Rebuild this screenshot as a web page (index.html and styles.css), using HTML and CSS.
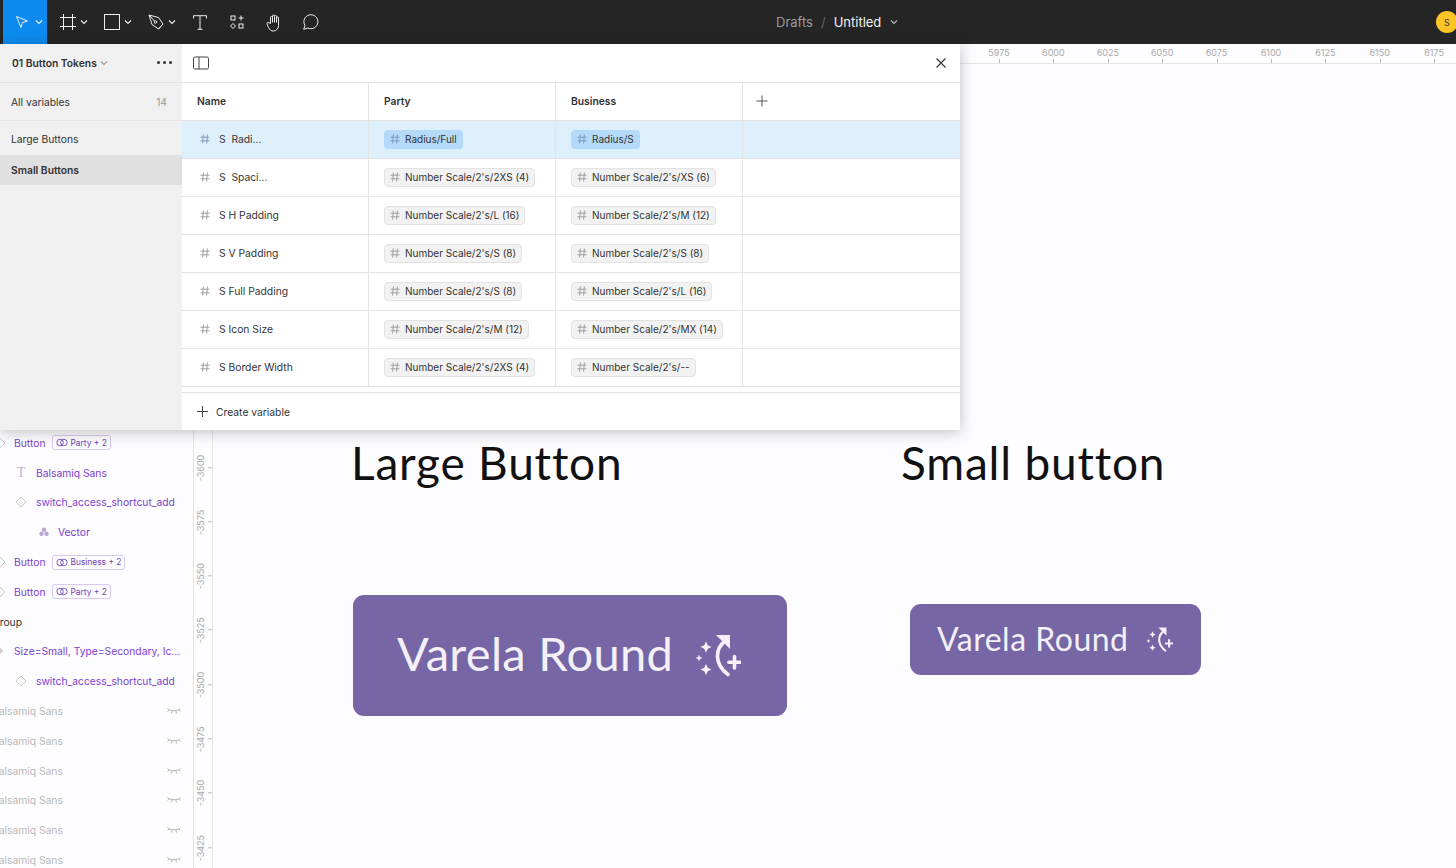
FILE: index.html
```html
<!DOCTYPE html>
<html lang="en">
<head>
    <meta charset="UTF-8">
    <title>Untitled - Variables</title>
    <link rel="stylesheet" href="styles.css">
</head>
<body>
    <svg class="defs" width="0" height="0">
        <symbol id="hash" viewBox="0 0 10 10">
            <path d="M3.4 .5 2.6 9.5M7.4 .5 6.6 9.5M.5 3.2H9.5M.5 6.8H9.5" fill="none" stroke="currentColor"/>
        </symbol>
        <symbol id="chev" viewBox="0 0 8 8">
            <path d="M1 2.5 4 5.5 7 2.5" fill="none" stroke="currentColor" stroke-width="1.1"/>
        </symbol>
        <symbol id="diamond" viewBox="0 0 12 12">
            <path d="M6 1 11 6 6 11 1 6Z" fill="none" stroke="currentColor"/>
        </symbol>
        <symbol id="mode" viewBox="0 0 14 10">
            <circle cx="4.8" cy="5" r="3.8" fill="none" stroke="currentColor"/>
            <circle cx="9.2" cy="5" r="3.8" fill="none" stroke="currentColor"/>
        </symbol>
        <symbol id="eye" viewBox="0 0 14 8">
            <path d="M.5 1.5C3 4.5 11 4.5 13.500 1.500M2 3 .8 4.500M12 3 13.200 4.500M5 4.200 4.500 6.500M9 4.200 9.500 6.500" fill="none" stroke="currentColor" stroke-width=".9"/>
        </symbol>
        <symbol id="shortcut" viewBox="0 0 46 43">
            <path d="M11 7.500 12.800 11.300 16.500 13 12.800 14.700 11 18.500 9.200 14.700 5.500 13 9.200 11.300ZM4 20.500 5 23 7.500 24 5 25 4 27.500 3 25 .5 24 3 23ZM11 30 12.800 33.800 16.500 35.500 12.800 37.200 11 41 9.200 37.200 5.500 35.500 9.200 33.800Z" fill="currentColor"/>
            <path d="M21 1H35V15L30 10Z" fill="currentColor"/>
            <path d="M30 7C20 15 19 30 33 40.500M39.500 22.500V34M33.800 28.300H45" fill="none" stroke="currentColor" stroke-width="3.600" stroke-linecap="round"/>
        </symbol>
    </svg>

    <header class="topbar">
        <div class="tool tool-move">
            <svg width="14" height="14" viewBox="0 0 14 14"><path d="M1.500 1.500 12.500 6 7.500 7.500 6 12.500Z" fill="none" stroke="currentColor"/></svg>
            <svg class="chev" width="8" height="8"><use href="#chev"/></svg>
        </div>
        <div class="tool tool-frame">
            <svg width="16" height="16" viewBox="0 0 16 16"><path d="M3.500 0V16M12.500 0V16M0 3.500H16M0 12.500H16" fill="none" stroke="currentColor"/></svg>
            <svg class="chev" width="8" height="8"><use href="#chev"/></svg>
        </div>
        <div class="tool tool-rect">
            <svg width="16" height="16" viewBox="0 0 16 16"><rect x=".5" y=".5" width="15" height="15" fill="none" stroke="currentColor"/></svg>
            <svg class="chev" width="8" height="8"><use href="#chev"/></svg>
        </div>
        <div class="tool tool-pen">
            <svg width="16" height="16" viewBox="0 0 16 16"><path d="M1 1 10.500 3.500 15 10 10.500 15 4 10.500ZM1 1 6.500 7M15 10 10.500 15" fill="none" stroke="currentColor"/><circle cx="7.500" cy="8" r="1.300" fill="none" stroke="currentColor"/></svg>
            <svg class="chev" width="8" height="8"><use href="#chev"/></svg>
        </div>
        <div class="tool tool-text">
            <svg width="14" height="15" viewBox="0 0 14 15"><path d="M.5 3.500V.7H13.500V3.500M7 .7V14.300M4.500 14.300H9.500" fill="none" stroke="currentColor"/></svg>
        </div>
        <div class="tool tool-res">
            <svg width="15" height="15" viewBox="0 0 15 15"><rect x="1" y="1" width="4" height="4" fill="none" stroke="currentColor"/><path d="M11 .5V5.500M8.500 3H13.500M3 8.500 5.500 11 3 13.500 .5 11Z" fill="none" stroke="currentColor"/><rect x="9" y="9" width="4" height="4" fill="none" stroke="currentColor"/></svg>
        </div>
        <div class="tool tool-hand">
            <svg width="17" height="19" viewBox="0 0 17 18"><path d="M4.500 10V4a1 1 0 0 1 2 0V2.500a1 1 0 0 1 2 0V3a1 1 0 0 1 2 0V4.500a1 1 0 0 1 2 0V12c0 3-2 5.500-5 5.500-2.500 0-3.500-1-5-3.500L1 10.500c-.6-1.300 1-2 2-1.200Z" fill="none" stroke="currentColor"/><path d="M6.500 4V9M8.500 3V9M10.500 4V9" stroke="currentColor"/></svg>
        </div>
        <div class="tool tool-comment">
            <svg width="16" height="16" viewBox="0 0 16 16"><path d="M.7 15.300 2 11.500A7 7 0 1 1 4.800 14Z" fill="none" stroke="currentColor"/></svg>
        </div>
        <div class="title">
            <span class="crumb">Drafts</span>
            <span class="slash">/</span>
            <span class="file">Untitled</span>
            <svg class="chev" width="8" height="8"><use href="#chev"/></svg>
        </div>
        <div class="avatar">S</div>
    </header>

    <div class="workspace">
        <aside class="layers">
            <div class="layer"><svg class="ico cut" width="12" height="12"><use href="#diamond"/></svg><span class="name">Button</span><span class="badge"><svg width="12" height="9"><use href="#mode"/></svg>Party + 2</span></div>
            <div class="layer lvl1"><span class="t-ico">T</span><span class="name">Balsamiq Sans</span></div>
            <div class="layer lvl1"><svg class="ico" width="12" height="12"><use href="#diamond"/></svg><span class="name">switch_access_shortcut_add</span></div>
            <div class="layer lvl2">
                <svg class="ico" width="10" height="10" viewBox="0 0 10 10"><circle cx="5" cy="2.800" r="2.200" fill="currentColor"/><circle cx="2.500" cy="6.800" r="2.200" fill="currentColor"/><circle cx="7.500" cy="6.800" r="2.200" fill="currentColor"/></svg>
                <span class="name">Vector</span>
            </div>
            <div class="layer"><svg class="ico cut" width="12" height="12"><use href="#diamond"/></svg><span class="name">Button</span><span class="badge"><svg width="12" height="9"><use href="#mode"/></svg>Business + 2</span></div>
            <div class="layer"><svg class="ico cut" width="12" height="12"><use href="#diamond"/></svg><span class="name">Button</span><span class="badge"><svg width="12" height="9"><use href="#mode"/></svg>Party + 2</span></div>
            <div class="layer plain"><span class="name">Group</span></div>
            <div class="layer"><svg class="ico cut" width="12" height="12" viewBox="0 0 12 12"><path d="M6 3 9 6 6 9 3 6Z" fill="currentColor"/></svg><span class="name">Size=Small, Type=Secondary, Ic...</span></div>
            <div class="layer lvl1"><svg class="ico" width="12" height="12"><use href="#diamond"/></svg><span class="name">switch_access_shortcut_add</span></div>
            <div class="layer hidden"><span class="name">Balsamiq Sans</span><svg class="eye" width="14" height="8"><use href="#eye"/></svg></div>
            <div class="layer hidden"><span class="name">Balsamiq Sans</span><svg class="eye" width="14" height="8"><use href="#eye"/></svg></div>
            <div class="layer hidden"><span class="name">Balsamiq Sans</span><svg class="eye" width="14" height="8"><use href="#eye"/></svg></div>
            <div class="layer hidden"><span class="name">Balsamiq Sans</span><svg class="eye" width="14" height="8"><use href="#eye"/></svg></div>
            <div class="layer hidden"><span class="name">Balsamiq Sans</span><svg class="eye" width="14" height="8"><use href="#eye"/></svg></div>
            <div class="layer hidden"><span class="name">Balsamiq Sans</span><svg class="eye" width="14" height="8"><use href="#eye"/></svg></div>
        </aside>

        <div class="stage">
            <div class="ruler-top">
                <span>5975</span><span>6000</span><span>6025</span><span>6050</span><span>6075</span><span>6100</span><span>6125</span><span>6150</span><span>6175</span>
            </div>
            <div class="stage-body">
                <div class="ruler-left">
                    <span>-3600</span><span>-3575</span><span>-3550</span><span>-3525</span><span>-3500</span><span>-3475</span><span>-3450</span><span>-3425</span>
                </div>
                <main class="canvas">
                    <h2 class="frame-title large-title">Large Button</h2>
                    <h2 class="frame-title small-title">Small button</h2>
                    <div class="demo-btn demo-large"><span class="demo-label">Varela Round</span><svg width="46" height="43"><use href="#shortcut"/></svg></div>
                    <div class="demo-btn demo-small"><span class="demo-label">Varela Round</span><svg width="27" height="25"><use href="#shortcut"/></svg></div>
                </main>
            </div>
        </div>

        <section class="modal">
            <div class="side">
                <div class="side-head">
                    <span class="coll">01 Button Tokens</span>
                    <svg class="coll-chev" width="8" height="8"><use href="#chev"/></svg>
                    <span class="dots"><i></i><i></i><i></i></span>
                </div>
                <div class="side-all"><span>All variables</span><span class="count">14</span></div>
                <div class="side-list">
                    <div class="side-item">Large Buttons</div>
                    <div class="side-item active">Small Buttons</div>
                </div>
            </div>
            <div class="panel">
                <div class="panel-head">
                    <svg width="16" height="14" viewBox="0 0 16 14"><rect x=".5" y="1" width="15" height="12" rx="1.500" fill="none" stroke="#444"/><path d="M6 1V13" stroke="#444"/></svg>
                    <svg width="12" height="12" viewBox="0 0 12 12"><path d="M1.500 1.500 10.500 10.500M10.500 1.500 1.500 10.500" stroke="#333" stroke-width="1.100"/></svg>
                </div>
                <div class="row row-head">
                    <div class="cell">Name</div>
                    <div class="cell">Party</div>
                    <div class="cell">Business</div>
                    <div class="cell cell-add">
                        <svg width="12" height="12" viewBox="0 0 12 12"><path d="M6 .5V11.500M.5 6H11.500" stroke="#555"/></svg>
                    </div>
                </div>
                <div class="row selected">
                    <div class="cell var-name"><svg class="hash" width="10" height="10"><use href="#hash"/></svg>S&nbsp; Radi...</div>
                    <div class="cell"><span class="chip"><svg class="hash" width="10" height="10"><use href="#hash"/></svg>Radius/Full</span></div>
                    <div class="cell"><span class="chip"><svg class="hash" width="10" height="10"><use href="#hash"/></svg>Radius/S</span></div>
                    <div class="cell"></div>
                </div>
                <div class="row">
                    <div class="cell var-name"><svg class="hash" width="10" height="10"><use href="#hash"/></svg>S&nbsp; Spaci...</div>
                    <div class="cell"><span class="chip"><svg class="hash" width="10" height="10"><use href="#hash"/></svg>Number Scale/2's/2XS (4)</span></div>
                    <div class="cell"><span class="chip"><svg class="hash" width="10" height="10"><use href="#hash"/></svg>Number Scale/2's/XS (6)</span></div>
                    <div class="cell"></div>
                </div>
                <div class="row">
                    <div class="cell var-name"><svg class="hash" width="10" height="10"><use href="#hash"/></svg>S H Padding</div>
                    <div class="cell"><span class="chip"><svg class="hash" width="10" height="10"><use href="#hash"/></svg>Number Scale/2's/L (16)</span></div>
                    <div class="cell"><span class="chip"><svg class="hash" width="10" height="10"><use href="#hash"/></svg>Number Scale/2's/M (12)</span></div>
                    <div class="cell"></div>
                </div>
                <div class="row">
                    <div class="cell var-name"><svg class="hash" width="10" height="10"><use href="#hash"/></svg>S V Padding</div>
                    <div class="cell"><span class="chip"><svg class="hash" width="10" height="10"><use href="#hash"/></svg>Number Scale/2's/S (8)</span></div>
                    <div class="cell"><span class="chip"><svg class="hash" width="10" height="10"><use href="#hash"/></svg>Number Scale/2's/S (8)</span></div>
                    <div class="cell"></div>
                </div>
                <div class="row">
                    <div class="cell var-name"><svg class="hash" width="10" height="10"><use href="#hash"/></svg>S Full Padding</div>
                    <div class="cell"><span class="chip"><svg class="hash" width="10" height="10"><use href="#hash"/></svg>Number Scale/2's/S (8)</span></div>
                    <div class="cell"><span class="chip"><svg class="hash" width="10" height="10"><use href="#hash"/></svg>Number Scale/2's/L (16)</span></div>
                    <div class="cell"></div>
                </div>
                <div class="row">
                    <div class="cell var-name"><svg class="hash" width="10" height="10"><use href="#hash"/></svg>S Icon Size</div>
                    <div class="cell"><span class="chip"><svg class="hash" width="10" height="10"><use href="#hash"/></svg>Number Scale/2's/M (12)</span></div>
                    <div class="cell"><span class="chip"><svg class="hash" width="10" height="10"><use href="#hash"/></svg>Number Scale/2's/MX (14)</span></div>
                    <div class="cell"></div>
                </div>
                <div class="row">
                    <div class="cell var-name"><svg class="hash" width="10" height="10"><use href="#hash"/></svg>S Border Width</div>
                    <div class="cell"><span class="chip"><svg class="hash" width="10" height="10"><use href="#hash"/></svg>Number Scale/2's/2XS (4)</span></div>
                    <div class="cell"><span class="chip"><svg class="hash" width="10" height="10"><use href="#hash"/></svg>Number Scale/2's/--</span></div>
                    <div class="cell"></div>
                </div>
                <div class="panel-foot">
                    <svg width="11" height="11" viewBox="0 0 11 11"><path d="M5.500 0V11M0 5.500H11" stroke="#444"/></svg>
                    Create variable
                </div>
            </div>
        </section>
    </div>
</body>
</html>
```

FILE: styles.css
```css
* {
    box-sizing: border-box;
}
html, body {
    height: 100%;
}
body {
    margin: 0;
    overflow: hidden;
    display: flex;
    flex-direction: column;
    font-family: Inter, "Liberation Sans", sans-serif;
    font-size: 10.3px;
    color: #333;
    background: #fdfcfe;
}
.defs {
    position: absolute;
}

/* top bar */
.topbar {
    flex: none;
    height: 44px;
    display: flex;
    align-items: center;
    padding-left: 3px;
    background: #252525;
    color: #eee;
}
.tool {
    height: 44px;
    display: flex;
    align-items: center;
}
.tool .chev {
    margin-left: 4px;
}
.tool-move {
    width: 44px;
    padding-left: 12px;
    background: #0c8cf0;
}
.tool-move .chev {
    margin-left: 6px;
}
.tool-frame {
    width: 45px;
    padding-left: 13px;
}
.tool-rect {
    width: 45px;
    padding-left: 12px;
}
.tool-pen {
    width: 45px;
    padding-left: 11px;
}
.tool-text {
    width: 35px;
    padding-left: 11px;
}
.tool-res {
    width: 41px;
    padding-left: 13px;
}
.tool-hand {
    width: 34px;
    padding-left: 8px;
}
.tool-comment {
    width: 38px;
    padding-left: 11px;
}
.title {
    margin-left: 446px;
    display: flex;
    align-items: center;
    font-size: 13px;
}
.crumb {
    color: #9a9a9a;
}
.slash {
    margin: 0 8px;
    color: #666;
}
.file {
    color: #f2f2f2;
}
.title .chev {
    margin-left: 9px;
    color: #bbb;
}
.avatar {
    margin-left: auto;
    margin-right: -2px;
    width: 22px;
    height: 22px;
    flex: none;
    border-radius: 50%;
    display: flex;
    align-items: center;
    justify-content: center;
    background: #fcc425;
    color: #333;
    font-size: 9px;
}

/* layers + canvas */
.workspace {
    position: relative;
    flex: 1;
    display: flex;
    min-height: 0;
}
.layers {
    flex: none;
    width: 193px;
    padding-top: 384px;
    overflow: hidden;
    color: #7a3fd1;
}
.layer {
    height: 29.8px;
    display: flex;
    align-items: center;
    padding-left: 14px;
    white-space: nowrap;
}
.layer .ico {
    flex: none;
    color: #c9c5d2;
}
.layer .cut {
    margin-left: -20px;
    margin-right: 8px;
}
.lvl1 {
    padding-left: 15px;
}
.lvl1 .ico, .t-ico {
    width: 12px;
    margin-right: 9px;
}
.t-ico {
    color: #bdb4d6;
    font-family: "Liberation Serif", serif;
    font-size: 14px;
    text-align: center;
}
.lvl2 {
    padding-left: 39px;
}
.lvl2 .ico {
    margin-right: 9px;
    color: #b5a8d6;
}
.badge {
    display: inline-flex;
    align-items: center;
    gap: 2px;
    height: 15px;
    margin-left: 7px;
    padding: 0 3px;
    border: 1px solid #d8c8f4;
    border-radius: 3px;
    font-size: 8.4px;
    color: #6f42b8;
}
.plain {
    padding-left: 0;
    color: #333;
}
.plain .name, .hidden .name {
    margin-left: -8px;
}
.hidden {
    padding-left: 0;
    color: #b9b9b9;
}
.eye {
    margin-left: auto;
    margin-right: 12px;
    color: #aaa;
}
.stage {
    flex: 1;
    min-width: 0;
    display: flex;
    flex-direction: column;
}
.ruler-top {
    flex: none;
    height: 20px;
    display: flex;
    padding-left: 778.800px;
    border-bottom: 1px solid #e4e4e4;
    color: #aaa;
    font-size: 9px;
}
.ruler-top span {
    position: relative;
    flex: none;
    width: 54.400px;
    padding-top: 3px;
    text-align: center;
}
.ruler-top span::after {
    content: "";
    position: absolute;
    left: 50%;
    bottom: 0;
    width: 1px;
    height: 4px;
    background: #bbb;
}
.stage-body {
    flex: 1;
    display: flex;
    min-height: 0;
}
.ruler-left {
    flex: none;
    width: 20px;
    padding-top: 376.500px;
    border-left: 1px solid #e4e4e4;
    border-right: 1px solid #e4e4e4;
    color: #aaa;
    font-size: 9px;
    overflow: hidden;
}
.ruler-left span {
    position: relative;
    display: block;
    height: 54.300px;
    writing-mode: vertical-rl;
    transform: rotate(180deg);
    text-align: center;
    padding-right: 1px;
}
.ruler-left span::after {
    content: "";
    position: absolute;
    right: 14px;
    top: 50%;
    width: 4px;
    height: 1px;
    background: #bbb;
}

.canvas {
    position: relative;
    flex: 1;
    min-width: 0;
}
.frame-title {
    position: absolute;
    top: 374px;
    margin: 0;
    font-family: Lato, sans-serif;
    font-size: 46px;
    font-weight: 400;
    line-height: 50px;
    letter-spacing: .8px;
    color: #111;
    white-space: nowrap;
}
.large-title {
    left: 138px;
}
.small-title {
    left: 688px;
}
.demo-btn {
    position: absolute;
    display: flex;
    align-items: center;
    background: #7666a6;
    color: #f3f0f7;
    font-family: Lato, sans-serif;
    white-space: nowrap;
}
.demo-btn svg {
    flex: none;
}
.demo-large {
    left: 140px;
    top: 531px;
    width: 434px;
    height: 121px;
    padding-left: 44px;
    gap: 22px;
    border-radius: 11px;
    font-size: 47px;
    letter-spacing: .3px;
}
.demo-large .demo-label {
    margin-bottom: 6px;
}
.demo-small {
    left: 697px;
    top: 540px;
    width: 291px;
    height: 71px;
    padding-left: 27px;
    gap: 17px;
    border-radius: 11px;
    font-size: 32px;
    letter-spacing: .5px;
}
.demo-small .demo-label {
    margin-bottom: 2px;
}

/* variables modal */
.modal {
    position: absolute;
    left: 0;
    top: 0;
    width: 960px;
    height: 386px;
    display: flex;
    background: #fff;
    box-shadow: 0 2px 14px rgba(0, 0, 0, .25);
}
.side {
    flex: none;
    width: 182px;
    background: #f0f0f0;
}
.side-head {
    height: 39px;
    display: flex;
    align-items: center;
    padding: 0 10px 1px 12px;
    border-bottom: 1px solid #e4e4e4;
}
.coll {
    font-weight: 600;
    color: #333;
}
.coll-chev {
    margin-left: 3px;
    color: #999;
}
.dots {
    margin-left: auto;
    display: flex;
    gap: 3px;
}
.dots i {
    width: 3px;
    height: 3px;
    border-radius: 50%;
    background: #333;
}
.side-all {
    height: 38px;
    display: flex;
    align-items: center;
    justify-content: space-between;
    padding: 0 15px 0 11px;
    border-bottom: 1px solid #e4e4e4;
}
.count {
    color: #999;
}
.side-list {
    padding-top: 3px;
}
.side-item {
    height: 30px;
    margin-bottom: 1px;
    padding-left: 11px;
    display: flex;
    align-items: center;
}
.side-item.active {
    background: #e0e0e0;
    font-weight: 600;
}
.panel {
    flex: 1;
    min-width: 0;
}
.panel-head {
    height: 39px;
    display: flex;
    align-items: center;
    justify-content: space-between;
    padding: 0 13px 1px 11px;
    border-bottom: 1px solid #e4e4e4;
}
.row {
    height: 38px;
    display: grid;
    grid-template-columns: 187px 187px 187px 1fr;
    border-bottom: 1px solid #e4e4e4;
}
.cell {
    display: flex;
    align-items: center;
    padding-left: 15px;
    padding-bottom: 1px;
    border-right: 1px solid #e4e4e4;
    white-space: nowrap;
}
.cell:last-child {
    border-right: 0;
}
.row-head .cell {
    font-weight: 600;
}
.row-head .cell-add {
    padding-left: 13px;
}
.hash {
    flex: none;
    color: #a0a0a0;
}
.var-name {
    padding-left: 18px;
    gap: 9px;
}
.chip {
    display: inline-flex;
    align-items: center;
    gap: 5px;
    height: 19px;
    padding: 0 5px;
    border: 1px solid #e2e2e2;
    border-radius: 4px;
    background: #f2f2f2;
    font-size: 10px;
}
.selected {
    background: #deeffc;
}
.selected .chip {
    border-color: #b3daf9;
    background: #b3daf9;
}
.selected .hash {
    color: #7d9cb8;
}
.panel-foot {
    margin-top: 5px;
    height: 38px;
    display: flex;
    align-items: center;
    gap: 8px;
    padding-left: 15px;
    border-top: 1px solid #e4e4e4;
}
```
